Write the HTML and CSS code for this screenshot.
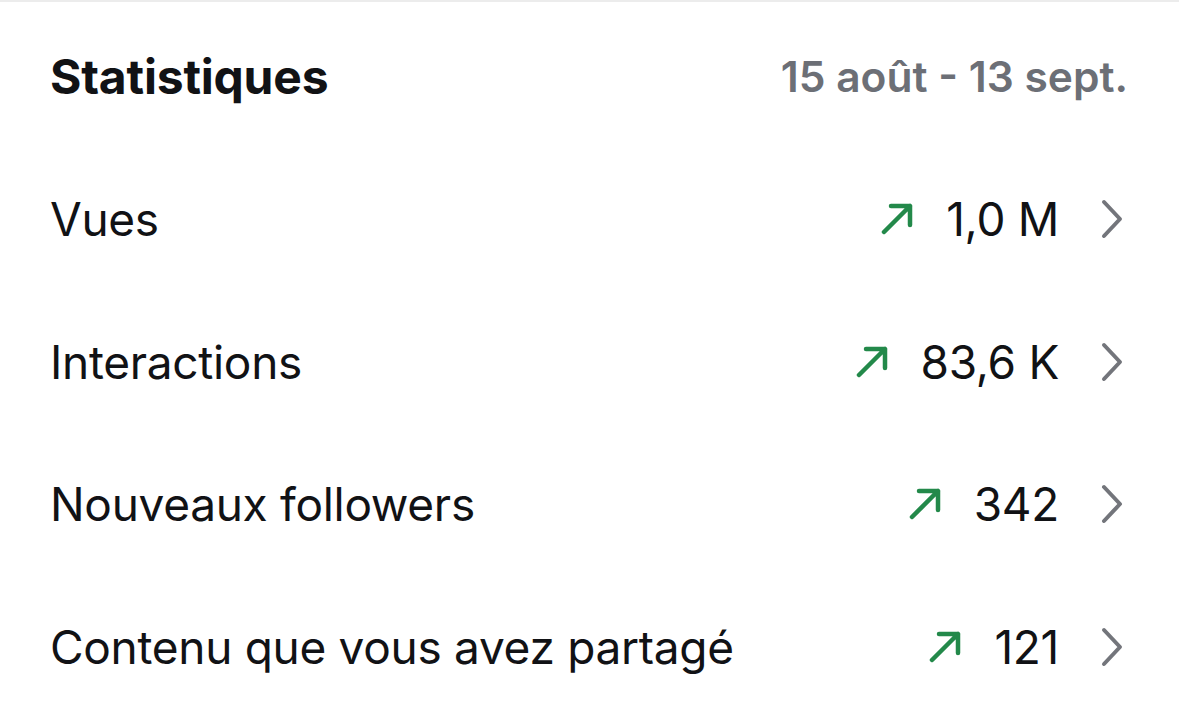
FILE: index.html
```html
<!DOCTYPE html>
<html lang="fr">
<head>
<meta charset="utf-8">
<link rel="stylesheet" href="styles.css">
</head>
<body>
<section class="stats">
  <header class="stats-head">
    <h2 class="title">Statistiques</h2>
    <span class="range">15 août - 13 sept.</span>
  </header>
  <ul class="rows">
    <li class="row">
      <span class="label">Vues</span>
      <span class="trend">
        <svg class="up" viewBox="0 0 32 32"><path d="M3 29 L29 3 M10 3 H29 V22"/></svg>
        <span class="value">1,0 M</span>
        <svg class="chev" viewBox="0 0 22 40"><path d="M3 3 L19 20 L3 37"/></svg>
      </span>
    </li>
    <li class="row">
      <span class="label">Interactions</span>
      <span class="trend">
        <svg class="up" viewBox="0 0 32 32"><path d="M3 29 L29 3 M10 3 H29 V22"/></svg>
        <span class="value">83,6 K</span>
        <svg class="chev" viewBox="0 0 22 40"><path d="M3 3 L19 20 L3 37"/></svg>
      </span>
    </li>
    <li class="row">
      <span class="label">Nouveaux followers</span>
      <span class="trend">
        <svg class="up" viewBox="0 0 32 32"><path d="M3 29 L29 3 M10 3 H29 V22"/></svg>
        <span class="value">342</span>
        <svg class="chev" viewBox="0 0 22 40"><path d="M3 3 L19 20 L3 37"/></svg>
      </span>
    </li>
    <li class="row">
      <span class="label">Contenu que vous avez partagé</span>
      <span class="trend">
        <svg class="up" viewBox="0 0 32 32"><path d="M3 29 L29 3 M10 3 H29 V22"/></svg>
        <span class="value">121</span>
        <svg class="chev" viewBox="0 0 22 40"><path d="M3 3 L19 20 L3 37"/></svg>
      </span>
    </li>
  </ul>
</section>
</body>
</html>
```

FILE: styles.css
```css
html, body {
  margin: 0;
  padding: 0;
  background: #ffffff;
}
body {
  font-family: Inter, "Noto Sans", sans-serif;
  color: #111215;
}
.stats {
  border-top: 2px solid #ececec;
  padding: 0 56px 0 50px;
}
.stats-head {
  display: flex;
  justify-content: space-between;
  align-items: center;
  box-sizing: border-box;
  height: 146px;
  padding-top: 2px;
}
.title {
  margin: 0;
  font-size: 48px;
  font-weight: 700;
  letter-spacing: -0.2px;
}
.range {
  font-size: 42.5px;
  font-weight: 600;
  color: #6c6f76;
  margin-right: -5px;
}
.rows {
  list-style: none;
  margin: 0;
  padding: 0;
}
.row {
  display: flex;
  justify-content: space-between;
  align-items: center;
  height: 142.5px;
}
.label, .value {
  font-size: 46px;
  font-weight: 400;
  letter-spacing: -0.3px;
}
.trend {
  display: flex;
  align-items: center;
}
.up {
  width: 32px;
  height: 32px;
  fill: none;
  stroke: #23894a;
  stroke-width: 4.5;
  stroke-linecap: round;
  stroke-linejoin: round;
  margin-right: 33px;
}
.chev {
  width: 22px;
  height: 40px;
  fill: none;
  stroke: #73757b;
  stroke-width: 4;
  stroke-linecap: round;
  stroke-linejoin: round;
  margin-left: 42px;
}
```
